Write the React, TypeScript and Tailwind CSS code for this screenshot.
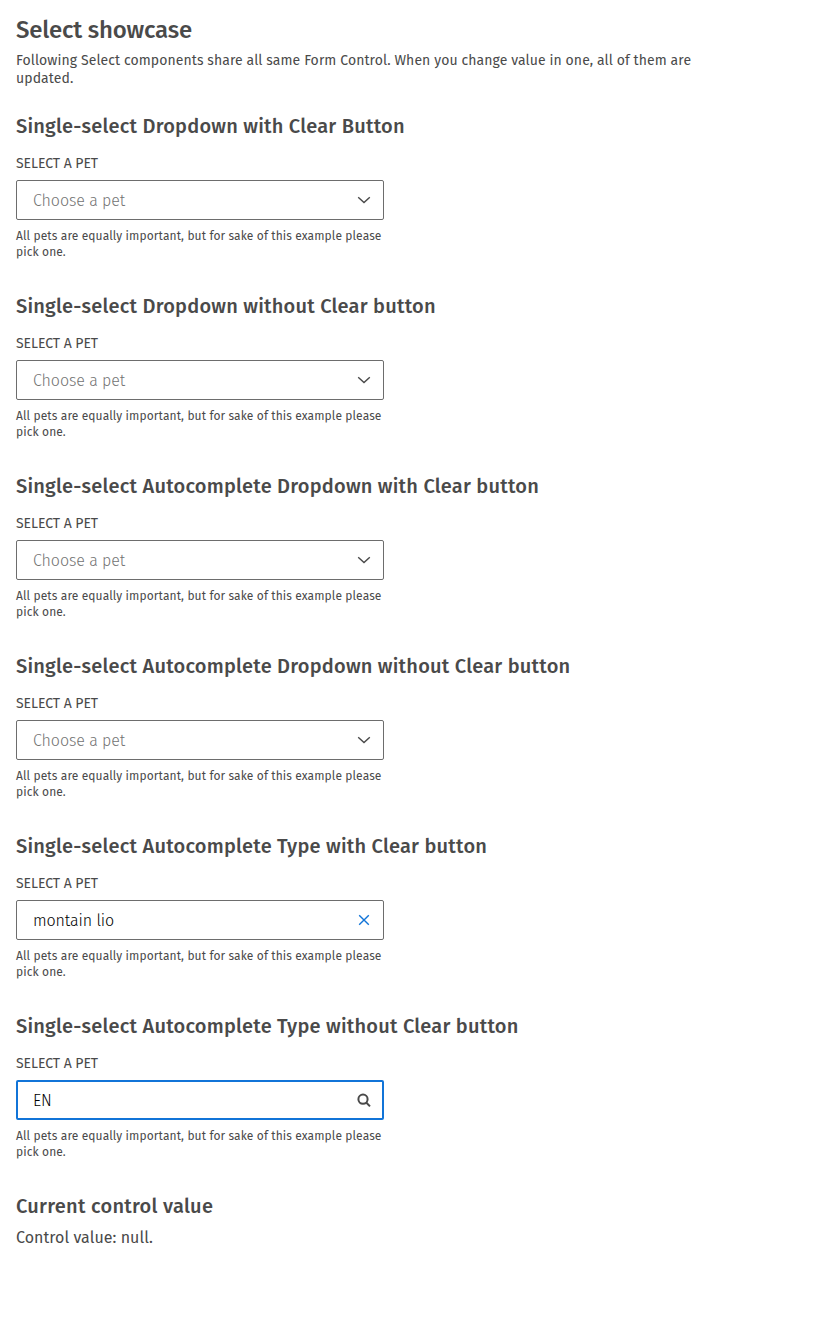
import React from "react";

type IconName = "chevron" | "clear" | "search";

function FieldIcon({ name }: { name: IconName }) {
  if (name === "chevron") {
    return (
      <svg width="16" height="16" viewBox="0 0 16 16" fill="none" stroke="#4a4a4a" strokeWidth="1.4" className="shrink-0">
        <path d="M2.2 5.2 8 10.6l5.8-5.4" />
      </svg>
    );
  }
  if (name === "clear") {
    return (
      <svg width="16" height="16" viewBox="0 0 16 16" fill="none" stroke="#1174d8" strokeWidth="1.4" className="shrink-0">
        <path d="m3.2 3.2 9.6 9.6M12.8 3.2l-9.6 9.6" />
      </svg>
    );
  }
  return (
    <svg width="16" height="16" viewBox="0 0 16 16" fill="none" stroke="#4a4a4a" strokeWidth="2" className="shrink-0">
      <circle cx="7" cy="7.2" r="4.6" />
      <path d="m10.2 10.5 3.8 3.9" />
    </svg>
  );
}

interface Field {
  title: string;
  icon: IconName;
  value?: string;
  focused?: boolean;
}

const fields: Field[] = [
  { title: "Single-select Dropdown with Clear Button", icon: "chevron" },
  { title: "Single-select Dropdown without Clear button", icon: "chevron" },
  { title: "Single-select Autocomplete Dropdown with Clear button", icon: "chevron" },
  { title: "Single-select Autocomplete Dropdown without Clear button", icon: "chevron" },
  { title: "Single-select Autocomplete Type with Clear button", icon: "clear", value: "montain lio" },
  { title: "Single-select Autocomplete Type without Clear button", icon: "search", value: "EN", focused: true },
];

function PetField({ title, icon, value, focused }: Field) {
  return (
    <section className="mb-8">
      <h2 className="text-[20px] leading-7 font-medium tracking-[0.22px]">{title}</h2>
      <div className="mt-[15px] text-[14px] leading-[18px] tracking-[-0.05px]">SELECT A PET</div>
      <div
        className={
          focused
            ? "mt-[7px] flex h-10 w-92 items-center justify-between rounded-xs border-2 border-[#1174d8] pr-[10px] pl-[15px]"
            : "mt-[7px] flex h-10 w-92 items-center justify-between rounded-xs border border-[#6d6d6d] pr-[11px] pl-4"
        }
      >
        <span
          className={
            value
              ? "pt-0.5 text-[16px] leading-6 font-light tracking-[-0.1px] text-black"
              : "pt-0.5 text-[16px] leading-6 font-light tracking-[-0.08px] text-[#737373]"
          }
        >
          {value ?? "Choose a pet"}
        </span>
        <FieldIcon name={icon} />
      </div>
      <div className="mt-2 w-92 text-[12px] leading-4 tracking-[0.1px]">
        All pets are equally important, but for sake of this example please pick one.
      </div>
    </section>
  );
}

export default function App() {
  return (
    <main className="min-h-[1328px] bg-white px-4 pt-3.5 font-['Fira_Sans','Open_Sans',sans-serif] text-[#4a4a4a]">
      <h1 className="text-[24px] leading-8 font-medium tracking-[-0.2px]">Select showcase</h1>
      <p className="mt-1.5 mb-6 w-[700px] text-[14px] leading-[18px] tracking-[0.09px]">
        Following Select components share all same Form Control. When you change value in one, all of them are updated.
      </p>
      {fields.map((field) => (
        <PetField key={field.title} {...field} />
      ))}
      <h2 className="text-[20px] leading-7 font-medium tracking-[0.27px]">Current control value</h2>
      <p className="mt-1.5 text-[16px] leading-6 tracking-[0.04px]">Control value: null.</p>
    </main>
  );
}
